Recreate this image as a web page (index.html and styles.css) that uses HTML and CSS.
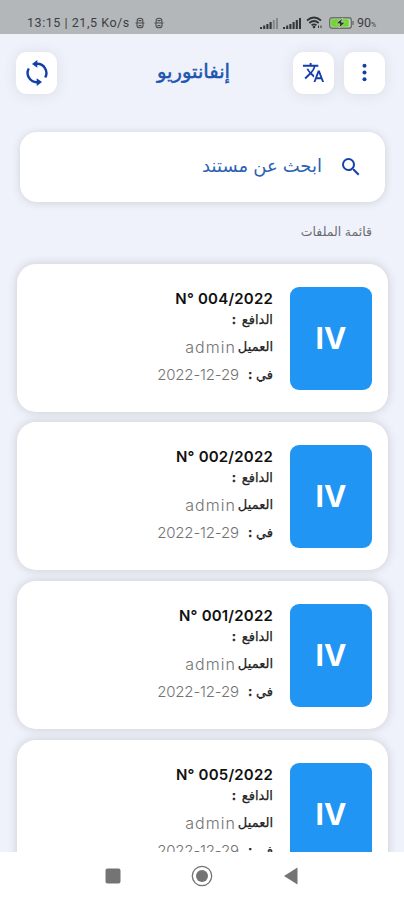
FILE: index.html
```html
<!DOCTYPE html>
<html lang="ar" dir="rtl">
<head>
  <meta charset="UTF-8">
  <meta name="viewport" content="width=device-width, initial-scale=1.0">
  <title>إنفانتوريو</title>
  <link rel="stylesheet" href="styles.css">
</head>
<body>
  <!-- Status bar -->
  <div class="status" dir="ltr">
    <span class="clock">13:15 | 21,5 Ko/s</span>
    <svg class="app" viewBox="0 0 10 12"><path d="M2.200 5.500V3.500Q2.200 1.200 5 1.200T7.800 3.500v2M.5 6h9M2 6.500v2.300Q2 10.800 5 10.800T8 8.800V6.500M3.500 8.600h3M3.500 3.600h3"/></svg>
    <svg class="app" viewBox="0 0 10 12"><path d="M2.200 5.500V3.500Q2.200 1.200 5 1.200T7.800 3.500v2M.5 6h9M2 6.500v2.300Q2 10.800 5 10.800T8 8.800V6.500M3.500 8.600h3M3.500 3.600h3"/></svg>
    <svg class="signal" viewBox="0 0 18 12"><path d="M1 12v-2M4.200 12V8.500M7.400 12V7M10.600 12V5"/><path class="weak" d="M13.800 12V3M17 12V1"/></svg>
    <svg class="signal" viewBox="0 0 18 12"><path d="M1 12v-2M4.200 12V8.500M7.400 12V7M10.600 12V5M13.800 12V3M17 12V1"/></svg>
    <svg class="wifi" viewBox="0 0 17 13"><path d="M1 4.500Q8 -1.500 15 4.500M3.300 7Q8 3 12.700 7M5.600 9.300Q8 7.500 10.400 9.300"/><circle cx="8" cy="11" r="1.300"/><path class="arrows" d="M12.500 12V9.500M15 9.500V12"/></svg>
    <svg class="battery" viewBox="0 0 26 12"><rect class="shell" x=".7" y=".7" width="21.600" height="10.600" rx="2.500"/><rect class="fill" x="2.200" y="2.200" width="17.500" height="7.600" rx="1"/><path d="M24 4v4"/><path class="bolt" d="M13.500 1 6.800 6.800h4l-.8 4.200 6.500-5.800h-4z"/></svg>
    <span class="percent">90<small>%</small></span>
  </div>

  <!-- Header -->
  <header>
    <button class="icon-btn" aria-label="القائمة">
      <svg viewBox="0 0 24 24"><circle cx="12" cy="5" r="2.100"/><circle cx="12" cy="12" r="2.100"/><circle cx="12" cy="19" r="2.100"/></svg>
    </button>
    <button class="icon-btn" aria-label="اللغة">
      <svg viewBox="0 0 24 24"><path d="M12.870 15.070l-2.540-2.510.03-.03A17.520 17.520 0 0 0 14.070 6H17V4h-7V2H8v2H1v2h11.170C11.500 7.920 10.440 9.750 9 11.350 8.070 10.320 7.300 9.190 6.690 8h-2c.73 1.630 1.730 3.170 2.980 4.560l-5.090 5.020L4 19l5-5 3.110 3.110.76-2.040zM18.500 10h-2L12 22h2l1.120-3h4.750L21 22h2l-4.500-12zm-2.620 7l1.620-4.330L19.120 17h-3.240z"/></svg>
    </button>
    <h1>إنفانتوريو</h1>
    <button class="icon-btn refresh" aria-label="تحديث">
      <svg viewBox="0 0 26 26"><path class="arc" d="M4.800 8.500A9.200 9.200 0 0 0 13 22.200M21.200 17.500A9.200 9.200 0 0 0 13 3.800"/><path d="M13.300 0v7.800L8 3.900zM12.700 26v-7.800l5.300 3.900z"/></svg>
    </button>
  </header>

  <!-- Search -->
  <div class="search">
    <svg viewBox="0 0 24 24"><path d="M15.500 14h-.79l-.28-.27A6.470 6.470 0 0 0 16 9.500 6.500 6.500 0 1 0 9.500 16c1.610 0 3.090-.59 4.230-1.570l.27.28v.79l5 4.990L20.490 19l-4.990-5zm-6 0a4.500 4.500 0 1 1 0-9 4.500 4.500 0 0 1 0 9z"/></svg>
    <span>ابحث عن مستند</span>
  </div>

  <h2>قائمة الملفات</h2>

  <!-- Files -->
  <main>
    <div class="card">
      <div class="tile">IV</div>
      <div class="info">
        <div class="number" dir="ltr">N° 004/2022</div>
        <div class="payer">الدافع <b>:</b></div>
        <div class="row">العميل<span class="value client">admin</span></div>
        <div class="row"><span>في <b>:</b></span><span class="value date" dir="ltr">2022-12-29</span></div>
      </div>
    </div>
    <div class="card">
      <div class="tile">IV</div>
      <div class="info">
        <div class="number" dir="ltr">N° 002/2022</div>
        <div class="payer">الدافع <b>:</b></div>
        <div class="row">العميل<span class="value client">admin</span></div>
        <div class="row"><span>في <b>:</b></span><span class="value date" dir="ltr">2022-12-29</span></div>
      </div>
    </div>
    <div class="card">
      <div class="tile">IV</div>
      <div class="info">
        <div class="number" dir="ltr">N° 001/2022</div>
        <div class="payer">الدافع <b>:</b></div>
        <div class="row">العميل<span class="value client">admin</span></div>
        <div class="row"><span>في <b>:</b></span><span class="value date" dir="ltr">2022-12-29</span></div>
      </div>
    </div>
    <div class="card">
      <div class="tile">IV</div>
      <div class="info">
        <div class="number" dir="ltr">N° 005/2022</div>
        <div class="payer">الدافع <b>:</b></div>
        <div class="row">العميل<span class="value client">admin</span></div>
        <div class="row"><span>في <b>:</b></span><span class="value date" dir="ltr">2022-12-29</span></div>
      </div>
    </div>
  </main>

  <!-- System navigation -->
  <nav dir="ltr">
    <svg viewBox="0 0 24 24"><rect x="4.500" y="4.500" width="15" height="15" rx="2"/></svg>
    <svg viewBox="0 0 24 24"><circle class="ring" cx="12" cy="12" r="9.700"/><circle cx="12" cy="12" r="6"/></svg>
    <svg viewBox="0 0 24 24"><path d="M5 12 18.500 3.500v17z"/></svg>
  </nav>
</body>
</html>
```

FILE: styles.css
```css
* {
  box-sizing: border-box;
  margin: 0;
  padding: 0;
}
body {
  display: flex;
  flex-direction: column;
  height: 900px;
  overflow: hidden;
  background: #eff2fb;
  font-family: Inter, 'DejaVu Sans', sans-serif;
}
svg {
  display: block;
  flex: none;
}

/* Status bar */
.status {
  display: flex;
  align-items: center;
  flex: none;
  height: 34px;
  padding: 11px 0 0 27px;
  background: #b3b7ba;
  color: #3b3e41;
  font-family: Roboto, sans-serif;
  font-size: 12.5px;
}
.clock {
  width: 104px;
  letter-spacing: 0.55px;
  white-space: nowrap;
}
.app {
  width: 10px;
  height: 12px;
  margin-left: 4px;
  margin-right: 5px;
  fill: none;
  stroke: #4c4f52;
  stroke-width: 1.1;
}
.signal {
  width: 18px;
  height: 12px;
  margin-right: 5px;
  stroke: #34373a;
  stroke-width: 2.1;
}
.app + .signal {
  margin-left: 91px;
}
.signal .weak {
  stroke: #85898c;
}
.wifi {
  width: 17px;
  height: 13px;
  margin-right: 6px;
  fill: #303336;
}
.wifi path {
  fill: none;
  stroke: #303336;
  stroke-width: 1.8;
}
.wifi .arrows {
  stroke-width: 1;
}
.battery {
  width: 26px;
  height: 12px;
  margin-right: 2px;
  stroke: #6b6f71;
  stroke-width: 1.4;
}
.battery .shell {
  fill: #c6d6bd;
}
.battery .fill {
  fill: #70d52f;
  stroke: none;
}
.battery .bolt {
  fill: #28312a;
  stroke: #cbe8bb;
  stroke-width: 0.7;
}
.percent small {
  font-size: 7px;
}

/* Header */
header {
  display: flex;
  align-items: center;
  flex: none;
  height: 77px;
  padding: 0 19px 0 16px;
}
.icon-btn {
  display: flex;
  align-items: center;
  justify-content: center;
  width: 41px;
  height: 42px;
  border: none;
  border-radius: 11px;
  background: #fff;
  box-shadow: 0 1px 14px rgba(90, 80, 70, 0.12);
}
.icon-btn + .icon-btn {
  margin-right: 10px;
}
.icon-btn svg {
  width: 23px;
  height: 23px;
  fill: #123fa8;
}
.icon-btn.refresh {
  margin-right: auto;
}
.refresh svg {
  width: 26px;
  height: 26px;
}
.refresh .arc {
  fill: none;
  stroke: #123fa8;
  stroke-width: 2.4;
}
h1 {
  margin: -4px 63px 0 0;
  color: #1c55b0;
  font-size: 19.5px;
  font-weight: normal;
  line-height: 30px;
  -webkit-text-stroke: 0.5px #1c55b0;
}

/* Search */
.search {
  display: flex;
  align-items: center;
  flex: none;
  height: 70px;
  margin: 21px 19px 0 20px;
  padding: 0 22px;
  border-radius: 17px;
  background: #fff;
  box-shadow: 0 1px 9px rgba(70, 65, 60, 0.18);
  color: #2a62b4;
  font-size: 18px;
}
.search svg {
  width: 24px;
  height: 24px;
  fill: #1742aa;
}
.search span {
  margin: -3px 17px 0 0;
}
h2 {
  flex: none;
  margin: 18px 32px 0 0;
  color: #6a6c70;
  font-size: 12.5px;
  font-weight: normal;
  line-height: 24px;
}

/* Files */
main {
  display: flex;
  flex-direction: column;
  gap: 10.7px;
  flex: 1;
  min-height: 0;
  padding: 19.6px 16px 0 17px;
  overflow: hidden;
}
.card {
  display: flex;
  flex: none;
  height: 148px;
  padding: 23px 16px 0;
  border-radius: 19px;
  background: #fff;
  box-shadow: 0 0 10px rgba(75, 70, 55, 0.22);
}
.tile {
  width: 82px;
  height: 103px;
  border-radius: 9px;
  background: #2195f3;
  color: #fff;
  font-size: 30px;
  font-weight: bold;
  line-height: 102px;
  text-align: center;
}
.info {
  margin-right: 17px;
  color: #222;
  font-size: 13px;
}
.number {
  height: 22px;
  color: #111;
  font-size: 15px;
  font-weight: 600;
  letter-spacing: 0.2px;
  line-height: 23px;
  text-align: right;
}
.payer {
  height: 24px;
  line-height: 20px;
  word-spacing: 2px;
}
.payer,
.row {
  -webkit-text-stroke: 0.25px #222;
}
.row {
  display: flex;
  height: 28px;
  line-height: 26px;
}
.value {
  color: #737373;
  font-size: 15px;
  font-weight: 300;
  line-height: 28px;
  -webkit-text-stroke: 0;
}
.client {
  margin-right: 2px;
  font-size: 16px;
  letter-spacing: 1px;
}
.date {
  margin-right: 9px;
  letter-spacing: -0.15px;
}

/* System navigation */
nav {
  display: flex;
  justify-content: center;
  flex: none;
  gap: 65px;
  height: 48px;
  padding-top: 12px;
  background: #fff;
}
nav svg {
  width: 24px;
  height: 24px;
  fill: #747474;
}
nav .ring {
  fill: none;
  stroke: #747474;
  stroke-width: 1.3;
}
```
